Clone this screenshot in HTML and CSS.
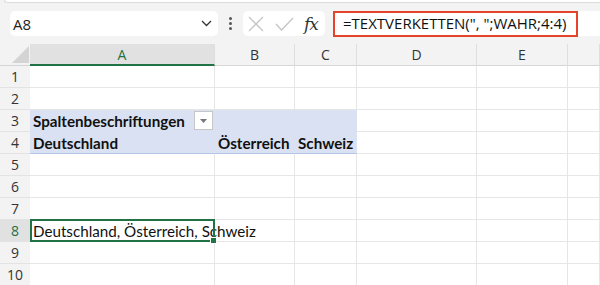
FILE: index.html
```html
<!DOCTYPE html>
<html lang="de">
<head>
    <meta charset="UTF-8">
    <title>Excel - TEXTVERKETTEN</title>
    <link rel="stylesheet" href="styles.css">
</head>
<body>
    <div class="ribbon-edge"></div>

    <div class="formula-row">
        <div class="name-box">
            <span>A8</span>
            <svg class="chevron" width="11" height="7" viewBox="0 0 11 7"><path d="M1 1 L5.5 5.5 L10 1" fill="none" stroke="#333" stroke-width="1.3"/></svg>
        </div>
        <div class="dots"><i></i><i></i><i></i></div>
        <div class="fx-buttons">
            <svg width="16" height="16" viewBox="0 0 16 16"><path d="M1 1 L15 15 M15 1 L1 15" stroke="#c4c4c4" stroke-width="1.3"/></svg>
            <svg width="19" height="14" viewBox="0 0 19 14"><path d="M1 7 L6.5 13 L18 1" fill="none" stroke="#c4c4c4" stroke-width="1.3"/></svg>
            <span class="fx">fx</span>
        </div>
        <div class="formula-bar">
            <div class="formula">=TEXTVERKETTEN(", ";WAHR;4:4)</div>
        </div>
    </div>

    <div class="sheet">
        <div class="corner"><svg width="19" height="19" viewBox="0 0 19 19"><path d="M18 1 L18 18 L1 18 Z" fill="#d4d4d4"/></svg></div>
        <div class="col-head active">A</div>
        <div class="col-head">B</div>
        <div class="col-head">C</div>
        <div class="col-head">D</div>
        <div class="col-head">E</div>
        <div class="col-head"></div>

        <div class="row-head">1</div>
        <div class="cell"></div><div class="cell"></div><div class="cell"></div><div class="cell"></div><div class="cell"></div><div class="cell"></div>

        <div class="row-head">2</div>
        <div class="cell"></div><div class="cell"></div><div class="cell"></div><div class="cell"></div><div class="cell"></div><div class="cell"></div>

        <div class="row-head">3</div>
        <div class="cell pivot bold">Spaltenbeschriftungen
            <span class="filter-btn"><svg width="7" height="4" viewBox="0 0 7 4"><path d="M0 0 L7 0 L3.5 4 Z" fill="#777"/></svg></span>
        </div>
        <div class="cell pivot"></div><div class="cell pivot"></div><div class="cell"></div><div class="cell"></div><div class="cell"></div>

        <div class="row-head">4</div>
        <div class="cell pivot pivot-end bold">Deutschland</div>
        <div class="cell pivot pivot-end bold">Österreich</div>
        <div class="cell pivot pivot-end bold">Schweiz</div>
        <div class="cell"></div><div class="cell"></div><div class="cell"></div>

        <div class="row-head">5</div>
        <div class="cell"></div><div class="cell"></div><div class="cell"></div><div class="cell"></div><div class="cell"></div><div class="cell"></div>

        <div class="row-head">6</div>
        <div class="cell"></div><div class="cell"></div><div class="cell"></div><div class="cell"></div><div class="cell"></div><div class="cell"></div>

        <div class="row-head">7</div>
        <div class="cell"></div><div class="cell"></div><div class="cell"></div><div class="cell"></div><div class="cell"></div><div class="cell"></div>

        <div class="row-head active">8</div>
        <div class="cell selected">Deutschland, Österreich, Schweiz</div>
        <div class="cell"></div><div class="cell"></div><div class="cell"></div><div class="cell"></div><div class="cell"></div>

        <div class="row-head">9</div>
        <div class="cell"></div><div class="cell"></div><div class="cell"></div><div class="cell"></div><div class="cell"></div><div class="cell"></div>

        <div class="row-head">10</div>
        <div class="cell"></div><div class="cell"></div><div class="cell"></div><div class="cell"></div><div class="cell"></div><div class="cell"></div>
    </div>
</body>
</html>
```

FILE: styles.css
```css
* {
    margin: 0;
    padding: 0;
    box-sizing: border-box;
}
body {
    width: 600px;
    height: 285px;
    overflow: hidden;
    background: #f3f3f3;
    font-family: "Open Sans", sans-serif;
    color: #222;
}
.ribbon-edge {
    height: 3px;
    margin-left: 4px;
    background: #fff;
    border-bottom: 1px solid #dcdcdc;
    border-left: 1px solid #dcdcdc;
    border-bottom-left-radius: 5px;
}
.formula-row {
    display: flex;
    align-items: center;
    height: 25px;
    margin-top: 8px;
    padding-left: 10px;
}
.name-box {
    width: 208px;
    height: 25px;
    background: #fff;
    border-radius: 5px;
    display: flex;
    align-items: center;
    justify-content: space-between;
    padding: 0 6px 0 3px;
    font-size: 15px;
}
.dots {
    width: 25px;
    display: flex;
    flex-direction: column;
    align-items: center;
    gap: 2px;
}
.dots i {
    width: 3px;
    height: 3px;
    border-radius: 50%;
    background: #555;
}
.fx-buttons {
    width: 82px;
    height: 25px;
    background: #fff;
    border-radius: 5px;
    display: flex;
    align-items: center;
    gap: 11px;
    padding-left: 5px;
}
.fx {
    font-family: "DejaVu Serif", serif;
    font-style: italic;
    font-size: 17px;
    color: #333;
    margin-left: -1px;
    letter-spacing: -1px;
}
.formula-bar {
    flex: 1;
    height: 25px;
    margin-left: 8px;
    background: #fff;
}
.formula {
    width: 245px;
    height: 26px;
    border: 2px solid #e5432c;
    padding-left: 8px;
    font-size: 15px;
    line-height: 21px;
    color: #111;
    white-space: nowrap;
}
.sheet {
    margin-top: 8px;
    display: grid;
    grid-template-columns: 30px 185px 80px 62px 120px 91px 32px;
    grid-auto-rows: 22px;
    background: #fff;
}
.corner {
    background: #f3f3f3;
    border-bottom: 1px solid #d6d6d6;
    display: flex;
    align-items: flex-end;
    justify-content: flex-end;
    padding-bottom: 1px;
}
.col-head {
    background: #f3f3f3;
    border-right: 1px solid #dedede;
    border-bottom: 1px solid #d6d6d6;
    text-align: center;
    font-size: 14px;
    line-height: 21px;
    color: #333;
}
.col-head.active {
    background: #e1e1e1;
    color: #217346;
    border-bottom: 2px solid #217346;
}
.row-head {
    background: #f3f3f3;
    border-bottom: 1px solid #e3e3e3;
    text-align: center;
    font-size: 14px;
    line-height: 22px;
    color: #333;
}
.row-head.active {
    background: #e1e1e1;
    color: #217346;
}
.cell {
    position: relative;
    border-right: 1px solid #e6e6e6;
    border-bottom: 1px solid #e6e6e6;
    font-family: Lato, sans-serif;
    font-size: 15.2px;
    line-height: 22px;
    padding-left: 3px;
    white-space: nowrap;
    color: #111;
}
.bold {
    font-weight: bold;
}
.pivot {
    background: #d9e1f2;
    border-right-color: #d9e1f2;
    border-bottom-color: #d9e1f2;
}
.pivot-end {
    border-bottom-color: #b4c6e7;
}
.filter-btn {
    position: absolute;
    right: 1px;
    top: 1px;
    width: 19px;
    height: 19px;
    background: #fff;
    border: 1px solid #c6c6c6;
    display: flex;
    align-items: center;
    justify-content: center;
}
.selected {
    z-index: 1;
}
.selected::after {
    content: "";
    position: absolute;
    left: 0;
    top: -1px;
    right: -1px;
    bottom: -1px;
    border: 2px solid #217346;
}
.selected::before {
    content: "";
    position: absolute;
    right: -3px;
    bottom: -3px;
    width: 5px;
    height: 5px;
    background: #217346;
    border: 1px solid #fff;
    z-index: 2;
}
```
